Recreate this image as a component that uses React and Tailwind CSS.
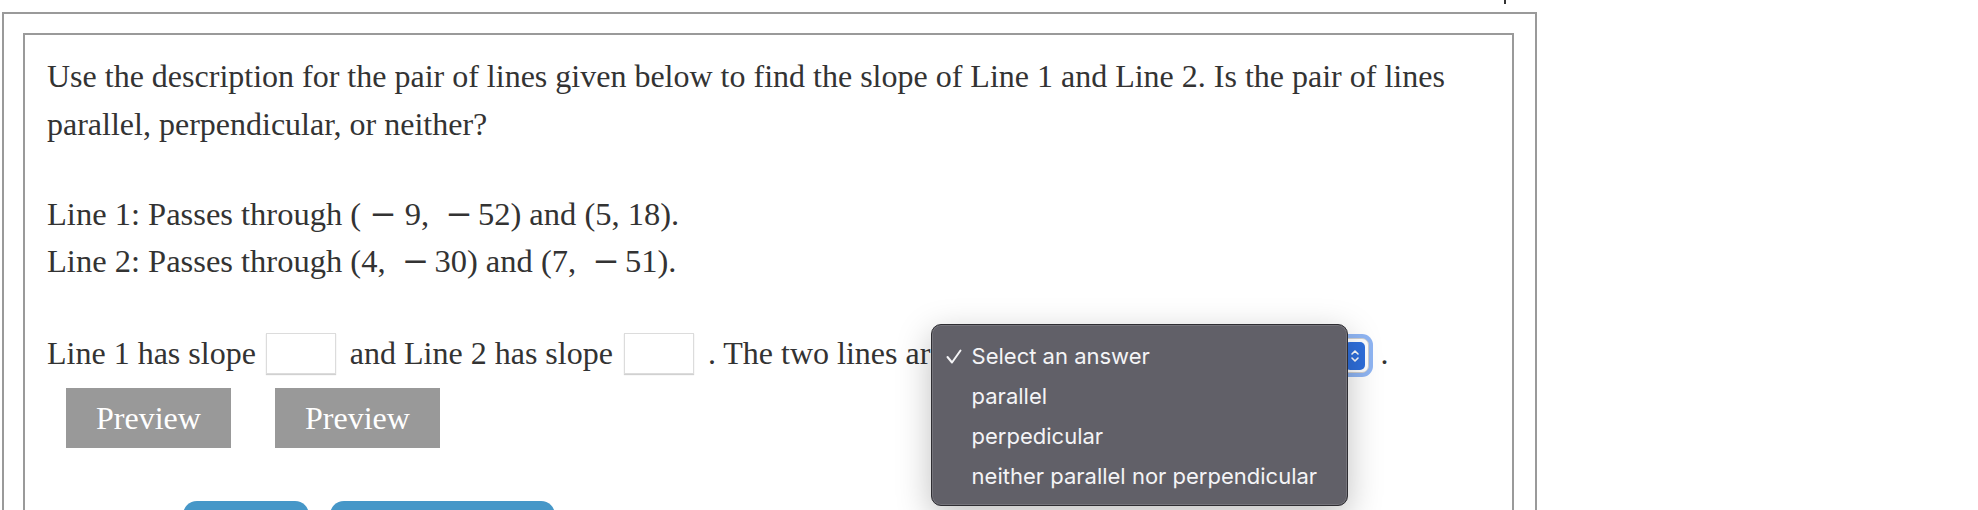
import React from "react";

const serif = "font-['Liberation_Serif','Times_New_Roman',serif]";

// math minus is wider than the Times one
const Minus = () => <span className="font-['DejaVu_Serif',serif]">&#8722;</span>;

const SlopeInput = ({ className = "" }) => (
  <div
    className={`h-[41px] w-[70px] bg-white border border-[#dcdcdc] shadow-[0_1px_1px_rgba(0,0,0,0.18)] ${className}`}
  />
);

const AnswerSelect = () => {
  const options = ["Select an answer", "parallel", "perpedicular", "neither parallel nor perpendicular"];

  return (
    <div className="relative ml-[10px] mt-[5px] h-[35px] w-[414px] rounded-[7px] border border-[#cfcfcf] bg-white shadow-[0_0_0_4px_#8fb5f3] flex items-center justify-end pr-[3px]">
      <div className="h-[28px] w-[20px] rounded-[5px] bg-[#2f6fdc] flex items-center justify-center">
        <svg width="10" height="16" viewBox="0 0 10 16" fill="none" stroke="white" strokeWidth="1.6" strokeLinecap="round" strokeLinejoin="round">
          <polyline points="2,6 5,3 8,6" />
          <polyline points="2,10 5,13 8,10" />
        </svg>
      </div>

      {/* open native menu */}
      <div className="absolute left-[-25px] top-[-15px] w-[417px] h-[182px] rounded-[10px] bg-[#616068] border border-[#2f2e33] shadow-[inset_0_0_0_1px_rgba(255,255,255,0.13),0_10px_34px_rgba(0,0,0,0.25)] pt-[11px] font-['Inter','Liberation_Sans',sans-serif] text-[22px] text-[#f4f4f6]">
        {options.map((opt, i) => (
          <div key={opt} className="h-[40px] flex items-center">
            <div className="w-[40px] flex justify-end pr-[10px]">
              {i === 0 && (
                <svg width="16" height="15" viewBox="0 0 16 15" fill="none" stroke="#f4f4f6" strokeWidth="2" strokeLinecap="round" strokeLinejoin="round">
                  <polyline points="1.5,8 6,13.5 14.5,1.5" />
                </svg>
              )}
            </div>
            <span>{opt}</span>
          </div>
        ))}
      </div>
    </div>
  );
};

const PreviewButton = () => (
  <div className="h-[60px] w-[165px] bg-[#999999] text-white text-[32px] flex items-center justify-center">
    Preview
  </div>
);

export default function App() {
  return (
    <div className={`h-[510px] w-[1978px] overflow-hidden bg-white text-[#333333] ${serif}`}>
      <div className="h-[12px]">
        <div className="ml-[1504px] w-[2px] h-[4px] bg-[#333333]" />
      </div>

      <div className="ml-[2px] w-[1535px] h-[600px] border-2 border-[#9a9a9a]">
        <div className="ml-[19px] mt-[19px] w-[1491px] h-[600px] border-2 border-[#9a9a9a] pl-[22px] pt-[17px]">
          <p className="text-[32px] leading-[48px]">
            Use the description for the pair of lines given below to find the slope of Line 1 and Line 2. Is the pair of lines
            <br />
            parallel, perpendicular, or neither?
          </p>

          <div className="mt-[43px] text-[32.5px] leading-[47px] whitespace-nowrap">
            <div>
              Line 1: Passes through (&#8197;<Minus />&#8197;9,&#8194;<Minus />&#8198;52) and (5,&#8197;18).
            </div>
            <div>
              Line 2: Passes through (4,&#8194;<Minus />&#8198;30) and (7,&#8194;<Minus />&#8198;51).
            </div>
          </div>

          <div className="mt-[44px] h-[48px] flex items-center text-[32px] whitespace-nowrap">
            <span>Line 1 has slope</span>
            <SlopeInput className="ml-[10px]" />
            <span className="ml-[14px]">and Line 2 has slope</span>
            <SlopeInput className="ml-[11px]" />
            <span className="ml-[14px]">. The two lines are</span>
            <AnswerSelect />
            <span className="ml-[12px]">.</span>
          </div>

          <div className="mt-[11px] ml-[19px] flex gap-[44px]">
            <PreviewButton />
            <PreviewButton />
          </div>

          <div className="mt-[53px] ml-[136px] flex gap-[21px]">
            <div className="h-[44px] w-[126px] rounded-[14px] bg-[#4697c8]" />
            <div className="h-[44px] w-[225px] rounded-[14px] bg-[#4697c8]" />
          </div>
        </div>
      </div>
    </div>
  );
}
